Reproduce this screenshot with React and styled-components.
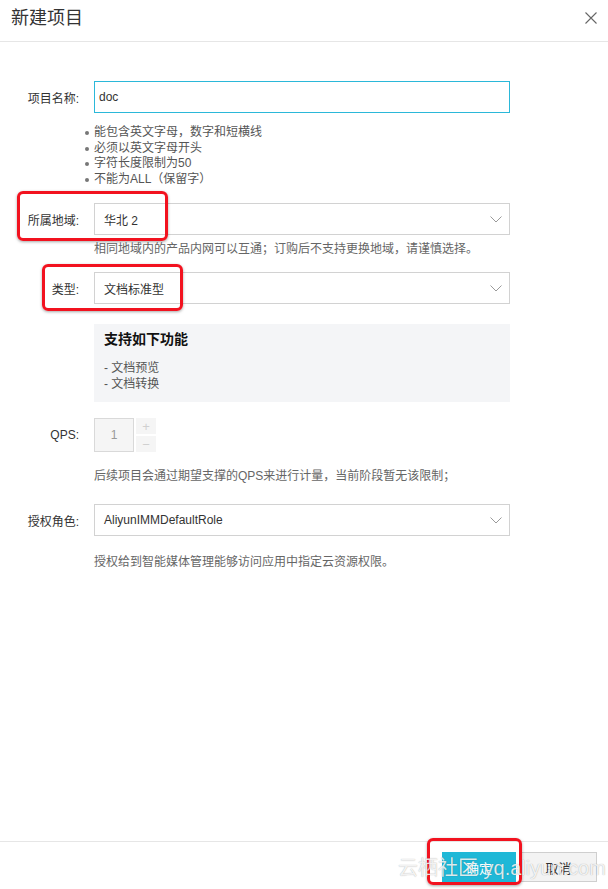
import React from 'react';
import styled, { createGlobalStyle } from 'styled-components';

const GlobalStyle = createGlobalStyle`
  html, body {
    margin: 0;
    padding: 0;
    background: #fff;
  }
  body {
    font-family: "Liberation Sans", "Noto Sans CJK SC", sans-serif;
    font-size: 12px;
    color: #333;
  }
`;

// styled-components
const Dialog = styled.div`
  position: relative;
  width: 608px;
  height: 889px;
  display: flex;
  flex-direction: column;
  background: #fff;
  overflow: hidden;
`;

const Header = styled.div`
  height: 42px;
  border-bottom: 1px solid #e6e6e6;
  padding: 9px 11px 0 11px;
  box-sizing: border-box;
  display: flex;
  justify-content: space-between;
  align-items: flex-start;
  flex-shrink: 0;
`;

const Title = styled.h2`
  margin: 0;
  font-size: 18px;
  line-height: 18px;
  font-weight: normal;
  color: #333;
`;

const Close = styled.button`
  border: none;
  background: none;
  padding: 0;
  margin-top: 3px;
  width: 12px;
  height: 12px;
  display: flex;
  cursor: pointer;
`;

const Body = styled.div`
  flex: 1;
  padding-top: 39px;
`;

const Item = styled.div`
  position: relative;
  display: grid;
  grid-template-columns: 79px 416px;
  column-gap: 15px;
  align-items: center;
  margin-top: ${p => p.$top || 0}px;
`;

const Label = styled.label`
  text-align: right;
  font-size: 12px;
  color: #333;
  white-space: nowrap;
`;

const Input = styled.div`
  height: 32px;
  box-sizing: border-box;
  border: 1px solid ${p => (p.$focus ? '#2bb8d9' : '#d2d2d2')};
  padding: 0 7px 0 ${p => (p.$focus ? 4 : 9)}px;
  display: flex;
  align-items: center;
  justify-content: space-between;
  font-size: 12px;
  color: #333;
  background: #fff;
`;

const Hint = styled.div`
  grid-column: 2;
  margin-top: ${p => p.$top || 0}px;
  font-size: 12px;
  line-height: 18px;
  color: #666;
  white-space: nowrap;
`;

const Rules = styled.ul`
  grid-column: 2;
  margin: 12px 0 0 0;
  padding: 0;
  list-style: none;
  color: #555;
  font-size: 12px;
  line-height: 15.6px;

  li {
    position: relative;
  }
  li::before {
    content: '';
    position: absolute;
    left: -9px;
    top: 6px;
    width: 4px;
    height: 4px;
    border-radius: 50%;
    background: #777;
  }
`;

const Features = styled.div`
  grid-column: 2;
  background: #f4f5f7;
  padding: 5px 10px 10px 10px;
`;

const FeatureTitle = styled.div`
  font-size: 14px;
  line-height: 20px;
  font-weight: bold;
  color: #111;
`;

const FeatureList = styled.div`
  margin-top: 11px;
  font-size: 12px;
  line-height: 16px;
  color: #555;
`;

const Stepper = styled.div`
  display: flex;
  gap: 2px;
`;

const StepValue = styled.div`
  width: 40px;
  height: 34px;
  box-sizing: border-box;
  border: 1px solid #d9d9d9;
  background: #f5f5f5;
  color: #999;
  display: flex;
  align-items: center;
  justify-content: center;
  font-size: 12px;
`;

const StepButtons = styled.div`
  display: flex;
  flex-direction: column;
  gap: 2px;
`;

const StepButton = styled.div`
  width: 20px;
  height: 16px;
  background: #f5f5f5;
  color: #d0d0d0;
  display: flex;
  align-items: center;
  justify-content: center;
  font-size: 13px;
  line-height: 1;
`;

const Footer = styled.div`
  position: relative;
  height: 48px;
  box-sizing: border-box;
  border-top: 1px solid #e6e6e6;
  padding: 10px 11px 0 0;
  display: flex;
  justify-content: flex-end;
  align-items: flex-start;
  gap: 4px;
  flex-shrink: 0;
`;

const Button = styled.button`
  height: 30px;
  width: ${p => (p.$primary ? 74 : 77)}px;
  border: 1px solid ${p => (p.$primary ? '#1fb8d7' : '#cfcfcf')};
  background: ${p => (p.$primary ? '#1fb8d7' : '#f3f3f3')};
  color: ${p => (p.$primary ? '#fff' : '#333')};
  font-family: inherit;
  font-size: 13px;
  padding: 0;
  cursor: pointer;
`;

const Mark = styled.div`
  position: absolute;
  left: ${p => p.$x}px;
  top: ${p => p.$y}px;
  width: ${p => p.$w}px;
  height: ${p => p.$h}px;
  box-sizing: border-box;
  border: 3px solid #f2121f;
  border-radius: 6px;
  box-shadow: 0 1px 3px rgba(0, 0, 0, 0.35);
  pointer-events: none;
`;

const Watermark = styled.div`
  position: absolute;
  left: 398px;
  top: 14px;
  font-size: 20px;
  line-height: 24px;
  white-space: nowrap;
  color: rgba(255, 255, 255, 0.85);
  text-shadow: 0 0 1px rgba(0, 0, 0, 0.35);
  pointer-events: none;
`;
// end styled-components

const Chevron = () => (
  <svg width="12" height="7" viewBox="0 0 12 7">
    <polyline points="0.5,0.5 6,6 11.5,0.5" fill="none" stroke="#9a9a9a" strokeWidth="1" />
  </svg>
);

const CloseIcon = () => (
  <svg width="12" height="12" viewBox="0 0 12 12">
    <path d="M0.5 0.5 L11.5 11.5 M11.5 0.5 L0.5 11.5" stroke="#666" strokeWidth="1.1" />
  </svg>
);

const Select = ({ value }) => (
  <Input>
    <span>{value}</span>
    <Chevron />
  </Input>
);

const App = () => {
  const rules = ['能包含英文字母，数字和短横线', '必须以英文字母开头', '字符长度限制为50', '不能为ALL（保留字）'];

  return (
    <>
      <GlobalStyle />
      <Dialog>
        <Header>
          <Title>新建项目</Title>
          <Close aria-label="关闭"><CloseIcon /></Close>
        </Header>

        <Body>
          <Item>
            <Label>项目名称:</Label>
            <Input $focus>doc</Input>
            <Rules>
              {rules.map(r => <li key={r}>{r}</li>)}
            </Rules>
          </Item>

          <Item $top={16}>
            <Label>所属地域:</Label>
            <Select value="华北 2" />
            <Hint $top={5}>相同地域内的产品内网可以互通；订购后不支持更换地域，请谨慎选择。</Hint>
            <Mark $x={17} $y={-12} $w={151} $h={50} />
          </Item>

          <Item $top={14}>
            <Label>类型:</Label>
            <Select value="文档标准型" />
            <Mark $x={42} $y={-8} $w={141} $h={47} />
          </Item>

          <Item $top={20}>
            <Features>
              <FeatureTitle>支持如下功能</FeatureTitle>
              <FeatureList>
                <div>- 文档预览</div>
                <div>- 文档转换</div>
              </FeatureList>
            </Features>
          </Item>

          <Item $top={16}>
            <Label>QPS:</Label>
            <Stepper>
              <StepValue>1</StepValue>
              <StepButtons>
                <StepButton>+</StepButton>
                <StepButton>−</StepButton>
              </StepButtons>
            </Stepper>
            <Hint $top={15}>后续项目会通过期望支撑的QPS来进行计量，当前阶段暂无该限制；</Hint>
          </Item>

          <Item $top={19}>
            <Label>授权角色:</Label>
            <Select value="AliyunIMMDefaultRole" />
            <Hint $top={17}>授权给到智能媒体管理能够访问应用中指定云资源权限。</Hint>
          </Item>
        </Body>

        <Footer>
          <Button $primary>确定</Button>
          <Button>取消</Button>
          <Mark $x={427} $y={-4} $w={95} $h={47} />
          <Watermark>云栖社区 yq.aliyun.com</Watermark>
        </Footer>
      </Dialog>
    </>
  );
};

export default App;
